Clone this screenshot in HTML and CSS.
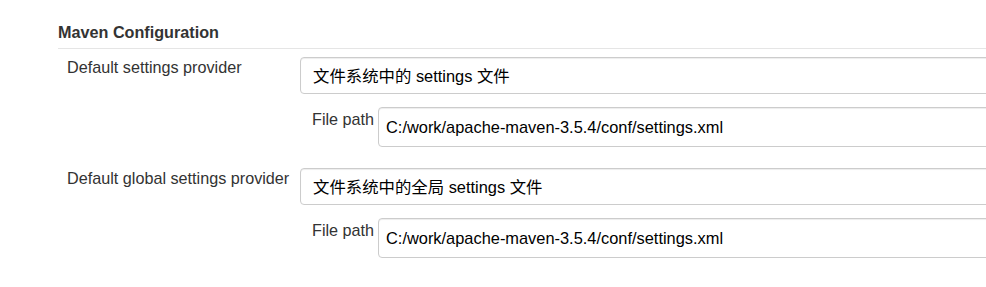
FILE: index.html
```html
<!DOCTYPE html>
<html lang="zh-CN">
<head>
    <meta charset="UTF-8">
    <title>Maven Configuration</title>
    <link rel="stylesheet" href="styles.css">
</head>
<body>
    <div class="section">
        <h3 class="section-title">Maven Configuration</h3>

        <div class="setting">
            <div class="setting-label">Default settings provider</div>
            <div class="setting-field">
                <select class="form-control">
                    <option>文件系统中的 settings 文件</option>
                </select>
                <div class="sub-row">
                    <div class="sub-label">File path</div>
                    <input class="form-control path-input" type="text" value="C:/work/apache-maven-3.5.4/conf/settings.xml">
                </div>
            </div>
        </div>

        <div class="setting">
            <div class="setting-label">Default global settings provider</div>
            <div class="setting-field">
                <select class="form-control">
                    <option>文件系统中的全局 settings 文件</option>
                </select>
                <div class="sub-row">
                    <div class="sub-label">File path</div>
                    <input class="form-control path-input" type="text" value="C:/work/apache-maven-3.5.4/conf/settings.xml">
                </div>
            </div>
        </div>
    </div>
</body>
</html>
```

FILE: styles.css
```css
/* page */
body {
    margin: 0;
    font-family: "Liberation Sans", Arial, "Noto Sans CJK SC", sans-serif;
    color: #333;
    background: #fff;
    overflow: hidden;
}

.section {
    margin-left: 58px;
    width: 1000px;
    padding-top: 22px;
}

/* heading + rule */
.section-title {
    margin: 0;
    font-size: 16.2px;
    font-weight: bold;
    line-height: 20px;
    padding-bottom: 6px;
    border-bottom: 1px solid #e5e5e5;
}

/* one label / field pair */
.setting {
    display: grid;
    grid-template-columns: 242px 1fr;
    margin-top: 8px;
    margin-bottom: 21px;
}

.setting + .setting {
    margin-top: 0;
}

.setting-label {
    padding-left: 9px;
    padding-top: 1px;
    font-size: 16.2px;
    line-height: 19px;
}

.setting-field {
    display: flex;
    flex-direction: column;
}

/* inputs */
.form-control {
    display: block;
    box-sizing: border-box;
    width: 100%;
    height: 37px;
    padding: 0 12px;
    font-family: "Liberation Sans", Arial, "Noto Sans CJK SC", sans-serif;
    font-size: 16.4px;
    color: #000;
    background: #fff;
    border: 1px solid #ccc;
    border-radius: 4px;
    box-shadow: inset 0 1px 1px rgba(0, 0, 0, 0.075);
    appearance: none;
    -webkit-appearance: none;
    outline: none;
}

.sub-row {
    display: flex;
    margin-top: 13px;
    margin-left: 12px;
}

.sub-label {
    width: 66px;
    flex-shrink: 0;
    padding-top: 3px;
    font-size: 16.2px;
    line-height: 19px;
}

.path-input {
    height: 40px;
    padding-left: 7px;
}
```
